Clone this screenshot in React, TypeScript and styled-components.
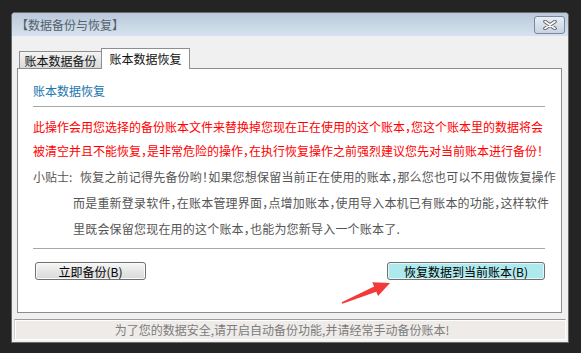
import React from "react";
import styled, { createGlobalStyle } from "styled-components";

const GlobalStyle = createGlobalStyle`
  html, body { margin: 0; padding: 0; background: #242424; }
  body { font-family: "Noto Sans CJK SC", "Noto Sans", sans-serif; }
  * { box-sizing: border-box; }
`;

const Page = styled.div`
  width: 581px;
  height: 353px;
  padding: 12px 0 0 11px;
`;

const Window = styled.div`
  position: relative;
  width: 558px;
  height: 331px;
  border: 1px solid #6a6a6a;
  border-radius: 4px 4px 0 0;
  background: #f0f0f0;
  display: flex;
  flex-direction: column;
`;

const TitleBar = styled.div`
  height: 23px;
  display: flex;
  align-items: center;
  justify-content: space-between;
  padding: 0 3px 0 10px;
  background: linear-gradient(#b9c9da, #d6e2ef);
  border-radius: 3px 3px 0 0;
`;

const Title = styled.div`
  font-size: 12px;
  color: #55606c;
  font-feature-settings: "halt";
`;

const CloseButton = styled.div`
  width: 31px;
  height: 18px;
  border: 1px solid #7a889c;
  border-radius: 3px;
  background: linear-gradient(#e6edf5, #c8d4e2);
  display: flex;
  align-items: center;
  justify-content: center;
`;

const Body = styled.div`
  flex: 1;
  display: flex;
  flex-direction: column;
  padding: 12px 2px 2px;
`;

const TabStrip = styled.div`
  display: flex;
  align-items: flex-end;
  height: 20px;
  margin-left: 5px;
`;

const Tab = styled.div<{ $active?: boolean }>`
  display: flex;
  align-items: center;
  justify-content: center;
  font-size: 12px;
  color: #111;
  border: 1px solid #8e8e8e;
  border-bottom: none;
  ${(p) =>
    p.$active
      ? `
    position: relative;
    z-index: 1;
    width: 89px;
    height: 21px;
    margin-bottom: -1px;
    margin-left: -1px;
    padding-bottom: 2px;
    background: #fff;
  `
      : `
    width: 83px;
    height: 17px;
    background: linear-gradient(#f4f4f4, #d9d9d9);
  `}
`;

const Panel = styled.div`
  margin: 0 4px 0 3px;
  height: 245px;
  border: 1px solid #8c8c8c;
  background: #fff;
  padding: 14px 16px 0 15px;
  display: flex;
  flex-direction: column;
`;

const Heading = styled.div`
  font-size: 12px;
  line-height: 16px;
  color: #2176ae;
`;

const Rule = styled.div<{ $gap: number }>`
  height: 1px;
  background: #a8a8a8;
  margin-top: ${(p) => p.$gap}px;
`;

const Warning = styled.div`
  margin-top: 8px;
  font-size: 12px;
  line-height: 24px;
  color: #ff0000;
  white-space: nowrap;
  font-feature-settings: "halt";
`;

const Tips = styled.div`
  margin-top: 1px;
  font-size: 12px;
  line-height: 26px;
  color: #555;
  white-space: nowrap;
  font-feature-settings: "halt";
  letter-spacing: 0.2px;
  padding-left: 40px;
  text-indent: -40px;
`;

const TipLabel = styled.span`
  display: inline-block;
  width: 47px;
  text-indent: 0;
  letter-spacing: 0;
`;

const ButtonRow = styled.div`
  margin-top: 13px;
  display: flex;
  justify-content: space-between;
  padding: 0 0 0 2px;
`;

const Button = styled.div<{ $primary?: boolean; $w: number }>`
  width: ${(p) => p.$w}px;
  height: 18px;
  border: 1px solid #707070;
  border-radius: 3px;
  font-size: 12px;
  color: #000;
  display: flex;
  align-items: center;
  justify-content: center;
  background: ${(p) =>
    p.$primary ? "#aeeaed" : "linear-gradient(#f7f7f7, #e6e6e6 50%, #d9d9d9)"};
  box-shadow: inset 0 0 0 1px ${(p) => (p.$primary ? "#e4f7f8" : "#fbfbfb")};
`;

const StatusBar = styled.div`
  margin-top: 6px;
  height: 21px;
  border-top: 1px solid #9c9c9c;
  border-left: 1px solid #d0d0d0;
  border-right: 1px solid #fff;
  border-bottom: 1px solid #fff;
  box-shadow: inset 1px 1px 0 #fff;
  background: #eeebe9;
  font-size: 12px;
  line-height: 19px;
  color: #7c7c7c;
  text-align: center;
  padding-right: 16px;
`;

const Arrow = styled.svg`
  position: absolute;
  left: 326px;
  top: 265px;
`;

export default function App() {
  return (
    <>
      <GlobalStyle />
      <Page>
        <Window>
          <TitleBar>
            <Title>【数据备份与恢复】</Title>
            <CloseButton>
              <svg width="14" height="10" viewBox="0 0 14 10">
                <path d="M2 1.5 L12 8.5 M12 1.5 L2 8.5" stroke="#666" strokeWidth="3.6" strokeLinecap="round" />
                <path d="M2 1.5 L12 8.5 M12 1.5 L2 8.5" stroke="#fff" strokeWidth="1.6" strokeLinecap="round" />
              </svg>
            </CloseButton>
          </TitleBar>
          <Body>
            <TabStrip>
              <Tab>账本数据备份</Tab>
              <Tab $active>账本数据恢复</Tab>
            </TabStrip>
            <Panel>
              <Heading>账本数据恢复</Heading>
              <Rule $gap={7} />
              <Warning>
                此操作会用您选择的备份账本文件来替换掉您现在正在使用的这个账本，您这个账本里的数据将会
                <br />
                被清空并且不能恢复，是非常危险的操作，在执行恢复操作之前强烈建议您先对当前账本进行备份！
              </Warning>
              <Tips>
                <TipLabel>小贴士:</TipLabel>
                恢复之前记得先备份哟！如果您想保留当前正在使用的账本，那么您也可以不用做恢复操作
                <br />
                而是重新登录软件，在账本管理界面，点增加账本，使用导入本机已有账本的功能，这样软件
                <br />
                里既会保留您现在用的这个账本，也能为您新导入一个账本了.
              </Tips>
              <Rule $gap={6} />
              <ButtonRow>
                <Button $w={111}>立即备份(B)</Button>
                <Button $w={158} $primary>
                  恢复数据到当前账本(B)
                </Button>
              </ButtonRow>
            </Panel>
            <StatusBar>为了您的数据安全,请开启自动备份功能,并请经常手动备份账本!</StatusBar>
          </Body>
          <Arrow width="56" height="30" viewBox="0 0 56 30">
            <polygon
              points="3.7,24.3 36.1,8.6 34.3,4.3 52,5 40.1,18.1 38.3,13.8 4.3,25.7"
              fill="#f23a3a"
            />
          </Arrow>
        </Window>
      </Page>
    </>
  );
}
